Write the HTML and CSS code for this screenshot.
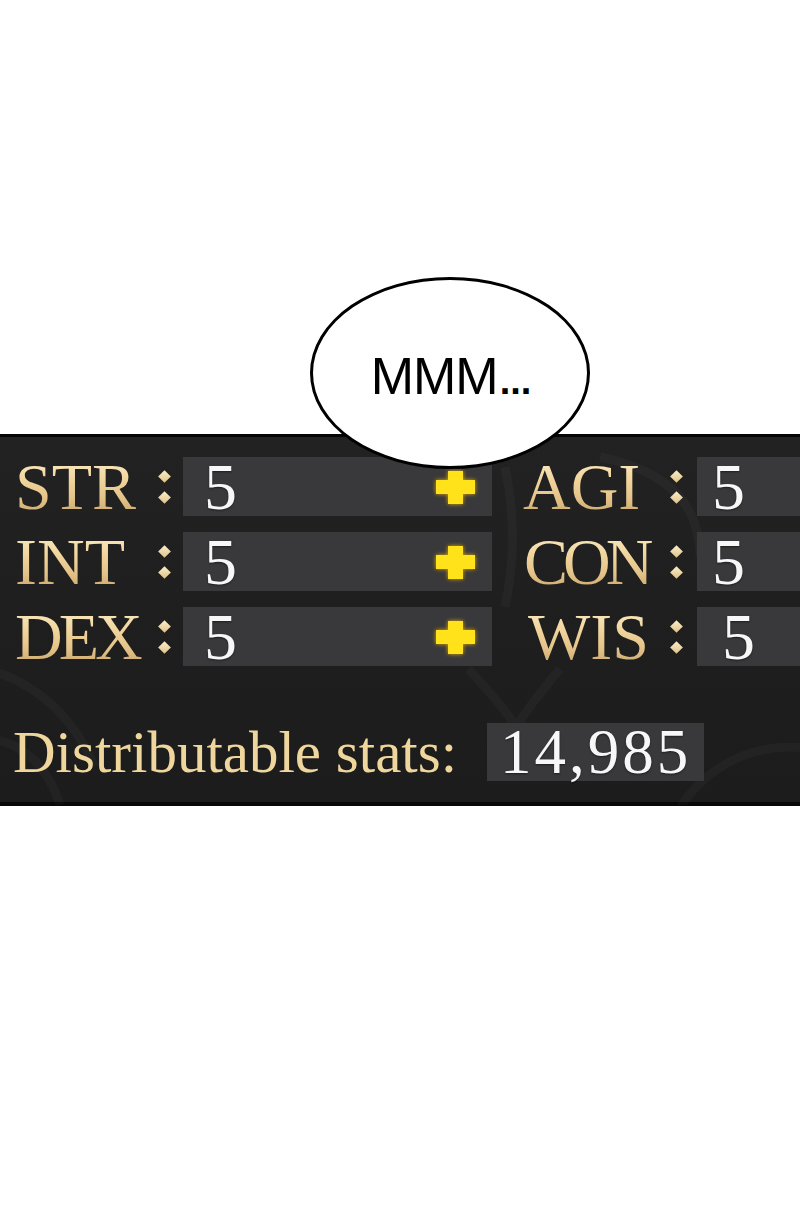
FILE: index.html
```html
<!DOCTYPE html>
<html lang="en">
<head>
  <meta charset="UTF-8">
  <meta name="viewport" content="width=device-width, initial-scale=1.0">
  <title>Status Window</title>
  <link rel="stylesheet" href="styles.css">
</head>
<body>

  <div class="page">
    <!-- speech bubble sitting on top of the window -->
    <div class="bubble">
      <span class="bubble-text">MMM<span class="dots">...</span></span>
    </div>

    <div class="panel">
      <!-- faint knot ornament in the background -->
      <svg class="panel-bg" width="800" height="368" viewBox="0 0 800 368" aria-hidden="true">
        <g fill="none" stroke="rgba(255,255,255,0.028)" stroke-width="9">
          <circle cx="790" cy="440" r="130"/>
          <path d="M600 20 Q 700 40 700 120"/>
          <path d="M468 232 Q 500 265 516 290 Q 532 265 560 232"/>
          <path d="M505 30 Q 520 100 505 170"/>
          <path d="M-20 230 Q 60 250 95 330"/>
          <path d="M-20 300 Q 40 305 60 368"/>
        </g>
      </svg>

      <div class="stats">
        <div class="stat-row">
          <div class="label">STR</div>
          <div class="colon"><i></i><i></i></div>
          <div class="value-box"><span class="value">5</span><span class="plus"></span></div>
          <div class="label label-right agi">AGI</div>
          <div class="colon"><i></i><i></i></div>
          <div class="value-box value-right"><span class="value">5</span></div>
        </div>
        <div class="stat-row">
          <div class="label">INT</div>
          <div class="colon"><i></i><i></i></div>
          <div class="value-box"><span class="value">5</span><span class="plus"></span></div>
          <div class="label label-right con">CON</div>
          <div class="colon"><i></i><i></i></div>
          <div class="value-box value-right"><span class="value">5</span></div>
        </div>
        <div class="stat-row">
          <div class="label dex">DEX</div>
          <div class="colon"><i></i><i></i></div>
          <div class="value-box"><span class="value">5</span><span class="plus"></span></div>
          <div class="label label-right wis">WIS</div>
          <div class="colon"><i></i><i></i></div>
          <div class="value-box value-right wis"><span class="value">5</span></div>
        </div>
      </div>

      <div class="points">
        <div class="points-label">Distributable stats:</div>
        <div class="points-box">14,985</div>
      </div>
    </div>
  </div>

</body>
</html>
```

FILE: styles.css
```css
body, html {
  margin: 0;
  background: #fff;
  font-family: "Liberation Serif", "Times New Roman", serif;
}

.page {
  width: 800px;
  overflow: hidden;
}

/* Speech bubble */
.bubble {
  position: relative;
  z-index: 2;
  box-sizing: border-box;
  width: 280px;
  height: 192px;
  margin: 277px 0 -35px 310px;
  background: #fff;
  border: 3px solid #000;
  border-radius: 50%;
  display: flex;
  align-items: center;
  justify-content: center;
}

.bubble-text {
  font-family: "Liberation Sans", Arial, sans-serif;
  font-size: 52px;
  line-height: 1;
  color: #000;
  letter-spacing: -1px;
  margin-top: 6px;
  margin-left: 2px;
}

.dots {
  font-weight: bold;
  letter-spacing: 0;
  font-size: 38px;
  margin-left: 2px;
}

/* Status window */
.panel {
  position: relative;
  box-sizing: border-box;
  height: 372px;
  background: linear-gradient(180deg, #222223 0%, #1e1e1f 60%, #1c1c1d 100%);
  border-top: 3px solid #050505;
  border-bottom: 4px solid #08080a;
  padding-top: 20px;
}

.panel-bg {
  position: absolute;
  left: 0;
  top: 0;
  z-index: 0;
}

.stats {
  position: relative;
  z-index: 1;
  display: flex;
  flex-direction: column;
  gap: 16px;
}

.stat-row {
  display: grid;
  grid-template-columns: 15px 131px 37px 309px 163px 42px 1fr;
  height: 59px;
}

.label {
  grid-column: 2;
  font-size: 66px;
  line-height: 59px;
  white-space: nowrap;
  background: linear-gradient(180deg, #fbecc4 0%, #f0d49c 40%, #e4c388 70%, #c9a66c 100%);
  -webkit-background-clip: text;
  background-clip: text;
  color: transparent;
}

.label.dex {
  letter-spacing: -4px;
}

.label-right {
  grid-column: 5;
}

.label-right.agi {
  padding-left: 31px;
}

.label-right.con {
  padding-left: 32px;
  letter-spacing: -5px;
}

.label-right.wis {
  padding-left: 36px;
}

.colon {
  display: flex;
  flex-direction: column;
  align-items: center;
  justify-content: center;
  gap: 12px;
}

.colon i {
  display: block;
  width: 9px;
  height: 9px;
  transform: rotate(45deg);
  background: linear-gradient(135deg, #fcefcc, #e0c186);
}

.value-box {
  display: flex;
  align-items: center;
  justify-content: space-between;
  background: #39393b;
  padding: 0 17px 0 21px;
}

.value-right {
  padding: 0 0 0 15px;
}

.value-right.wis {
  padding-left: 25px;
}

.value {
  font-size: 66px;
  line-height: 59px;
  color: #f7f7f7;
  text-shadow: 0 1px 2px rgba(0, 0, 0, 0.5);
}

/* yellow glowing plus button */
.plus {
  position: relative;
  width: 39px;
  height: 33px;
  margin-top: 2px;
  filter: drop-shadow(0 0 2px rgba(235, 175, 0, 0.95));
}

.plus::before,
.plus::after {
  content: "";
  position: absolute;
  background: #ffe21a;
}

.plus::before {
  left: 0;
  right: 0;
  top: 9px;
  height: 14px;
}

.plus::after {
  top: 0;
  bottom: 0;
  left: 12px;
  width: 15px;
}

/* points left to spend */
.points {
  position: relative;
  z-index: 1;
  display: flex;
  align-items: center;
  gap: 30px;
  margin-top: 57px;
  padding-left: 13px;
}

.points-label {
  font-size: 59px;
  line-height: 58px;
  color: #efd69c;
  white-space: nowrap;
}

.points-box {
  background: #39393b;
  height: 58px;
  line-height: 58px;
  padding: 0 13px;
  font-size: 63px;
  letter-spacing: 3px;
  color: #f7f7f7;
  text-shadow: 0 1px 2px rgba(0, 0, 0, 0.5);
}
```
